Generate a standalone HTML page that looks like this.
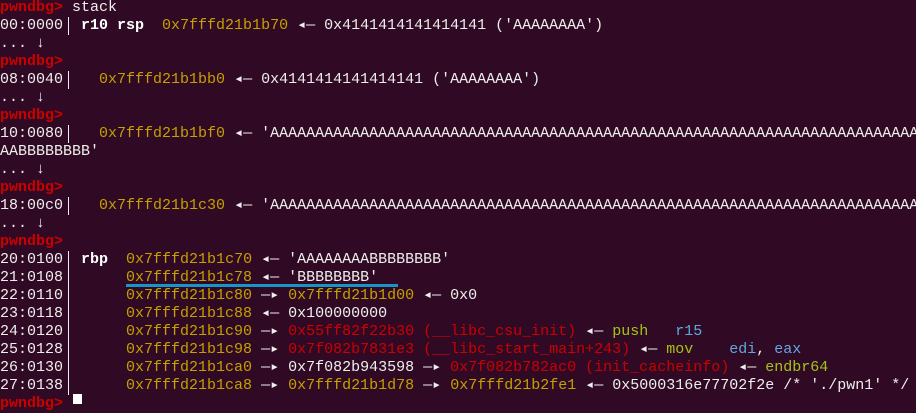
<!DOCTYPE html>
<html><head><meta charset="utf-8"><style>
html,body{margin:0;padding:0;background:#300a24;width:916px;height:402px;overflow:hidden}
#t{position:absolute;left:0;top:-1px;font-family:"Liberation Mono","DejaVu Sans Mono",monospace;font-size:15px;color:#eeeeec}
.l{height:18px;line-height:18px;white-space:pre;overflow:hidden;width:916px}
.p{color:#cc0000;font-weight:bold}
.y{color:#c4a000}
.r{color:#cc0000}
.g{color:#a5c21a}
.b{color:#5fa8df}
.w{font-weight:bold;color:#fff}
.v{position:absolute;left:68px;width:1px;background:#eeeeec}
.u{position:absolute;left:126px;top:284px;width:272px;height:3px;background:#1a94c6}
.c{position:absolute;left:73px;top:394px;width:9px;height:10px;background:#fff}
</style></head><body>
<div id="t"><div class="l"><span class="p">pwndbg&gt;</span> stack</div><div class="l">00:0000  <span class="w">r10 rsp</span>  <span class="y">0x7fffd21b1b70</span> ◂— 0x4141414141414141 ('AAAAAAAA')</div><div class="l">... ↓</div><div class="l"><span class="p">pwndbg&gt;</span></div><div class="l">08:0040    <span class="y">0x7fffd21b1bb0</span> ◂— 0x4141414141414141 ('AAAAAAAA')</div><div class="l">... ↓</div><div class="l"><span class="p">pwndbg&gt;</span></div><div class="l">10:0080    <span class="y">0x7fffd21b1bf0</span> ◂— 'AAAAAAAAAAAAAAAAAAAAAAAAAAAAAAAAAAAAAAAAAAAAAAAAAAAAAAAAAAAAAAAAAAAAAAAA</div><div class="l">AABBBBBBBB'</div><div class="l">... ↓</div><div class="l"><span class="p">pwndbg&gt;</span></div><div class="l">18:00c0    <span class="y">0x7fffd21b1c30</span> ◂— 'AAAAAAAAAAAAAAAAAAAAAAAAAAAAAAAAAAAAAAAAAAAAAAAAAAAAAAAAAAAAAAAAAAAAAAAA</div><div class="l">... ↓</div><div class="l"><span class="p">pwndbg&gt;</span></div><div class="l">20:0100  <span class="w">rbp</span>  <span class="y">0x7fffd21b1c70</span> ◂— 'AAAAAAAABBBBBBBB'</div><div class="l">21:0108       <span class="y">0x7fffd21b1c78</span> ◂— 'BBBBBBBB'</div><div class="l">22:0110       <span class="y">0x7fffd21b1c80</span> —▸ <span class="y">0x7fffd21b1d00</span> ◂— 0x0</div><div class="l">23:0118       <span class="y">0x7fffd21b1c88</span> ◂— 0x100000000</div><div class="l">24:0120       <span class="y">0x7fffd21b1c90</span> —▸ <span class="r">0x55ff82f22b30 (__libc_csu_init)</span> ◂— <span class="g">push</span>   <span class="b">r15</span></div><div class="l">25:0128       <span class="y">0x7fffd21b1c98</span> —▸ <span class="r">0x7f082b7831e3 (__libc_start_main+243)</span> ◂— <span class="g">mov</span>    <span class="b">edi</span>, <span class="b">eax</span></div><div class="l">26:0130       <span class="y">0x7fffd21b1ca0</span> —▸ 0x7f082b943598 —▸ <span class="r">0x7f082b782ac0 (init_cacheinfo)</span> ◂— <span class="g">endbr64</span></div><div class="l">27:0138       <span class="y">0x7fffd21b1ca8</span> —▸ <span class="y">0x7fffd21b1d78</span> —▸ <span class="y">0x7fffd21b2fe1</span> ◂— 0x5000316e77702f2e /* './pwn1' */</div><div class="l"><span class="p">pwndbg&gt;</span></div></div>
<div class="v" style="top:17px;height:18px"></div>
<div class="v" style="top:71px;height:18px"></div>
<div class="v" style="top:125px;height:18px"></div>
<div class="v" style="top:197px;height:18px"></div>
<div class="v" style="top:251px;height:144px"></div>
<div class="u"></div>
<div class="c"></div>
</body></html>
